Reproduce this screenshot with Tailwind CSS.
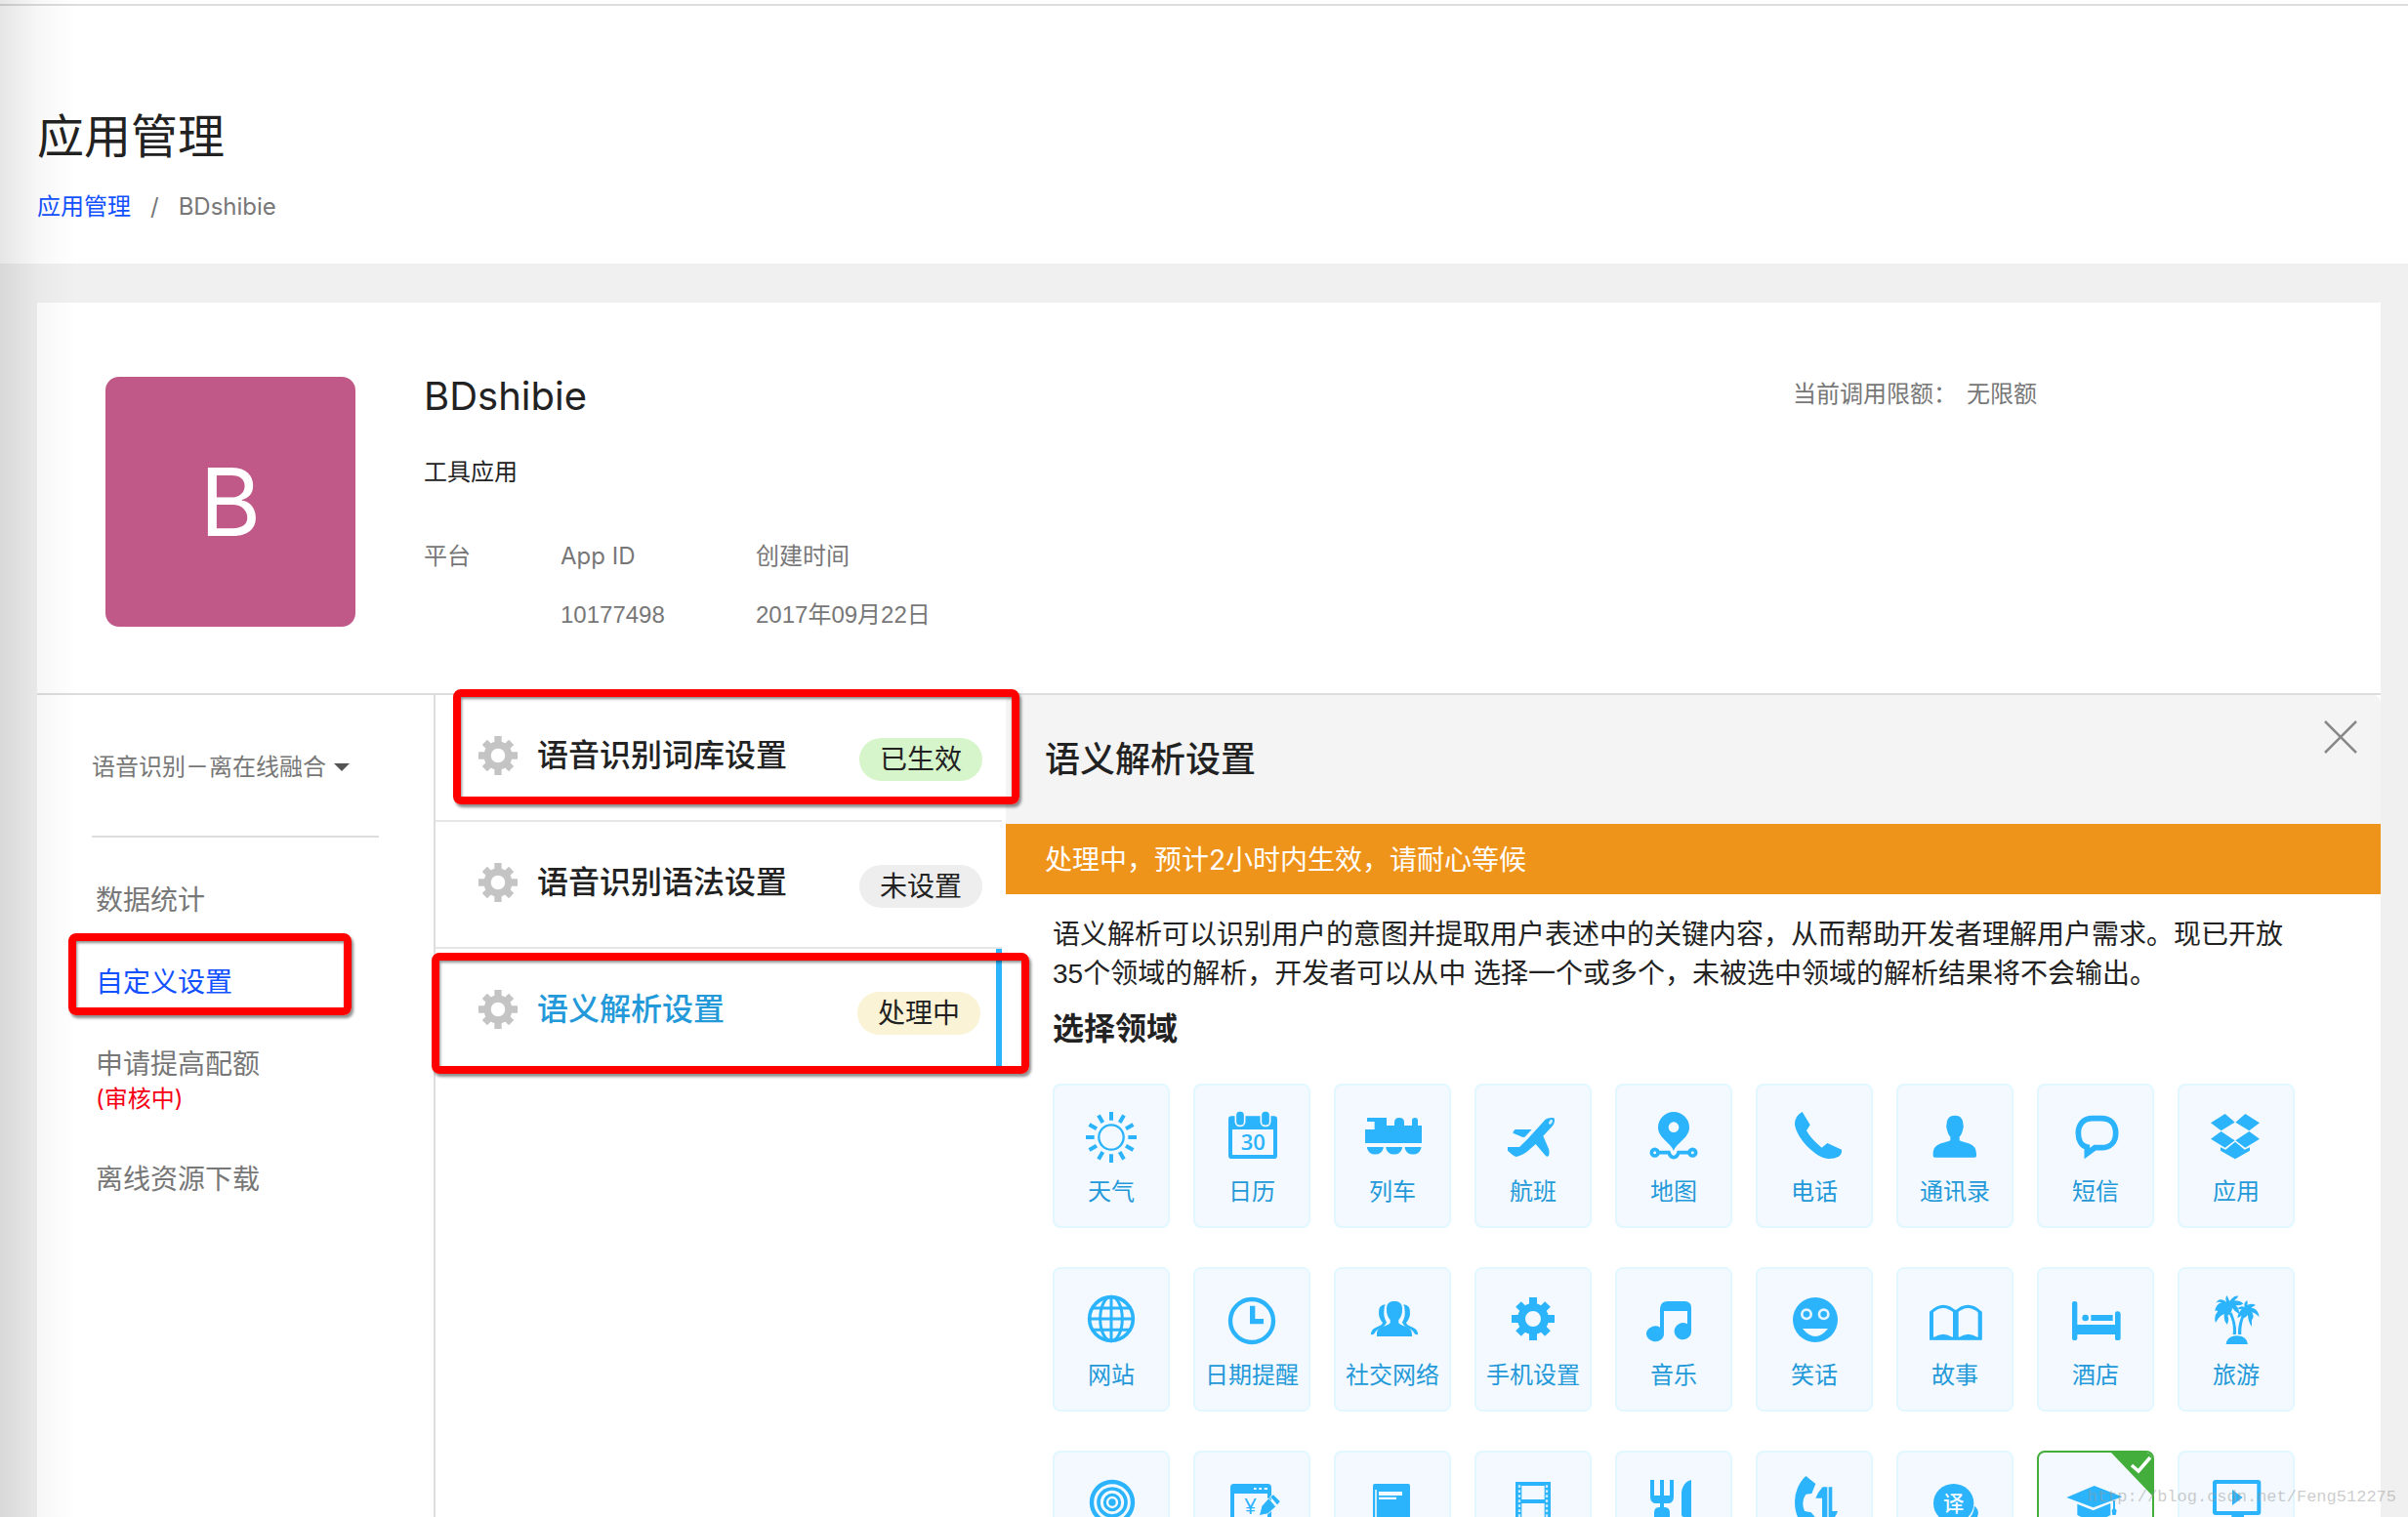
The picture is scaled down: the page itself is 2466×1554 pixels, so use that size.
<!DOCTYPE html>
<html lang="zh-CN">
<head>
<meta charset="utf-8">
<meta name="viewport" content="width=device-width, initial-scale=1">
<title>应用管理</title>
<script src="https://cdn.jsdelivr.net/npm/@tailwindcss/browser@4"></script>
</head>
<body class="bg-[#f0f0f0] font-['Inter','Noto_Sans_CJK_SC',sans-serif] text-[#222]">

<!-- Icon set -->
<svg class="hidden" aria-hidden="true">
  <symbol id="gear" viewBox="24 18 132 132">
    <circle cx="90" cy="84" r="36" fill="none" stroke="currentColor" stroke-width="24"/>
    <g stroke="currentColor" stroke-width="24">
      <path d="M90 18V40M90 128V150M24 84H46M134 84H156M45 39L60 54M120 114L135 129M135 39L120 54M60 114L45 129"/>
    </g>
  </symbol>
  <symbol id="sun" viewBox="0 0 180 180">
    <circle cx="90" cy="90" r="38" fill="none" stroke="currentColor" stroke-width="7"/>
    <g stroke="currentColor" stroke-width="12">
      <path d="M90 12V38M90 142V168M12 90H38M142 90H168"/>
      <path d="M51 22.500L64 45M116 135L129 157.500M22.500 51L45 64M135 116L157.500 129M22.500 129L45 116M135 64L157.500 51M51 157.500L64 135M116 45L129 22.500"/>
    </g>
  </symbol>
  <symbol id="calendar" viewBox="0 0 180 180">
    <rect x="18" y="25" width="150" height="131" rx="10" fill="currentColor"/>
    <rect x="30" y="66" width="126" height="78" fill="#f3f9fe"/>
    <g fill="currentColor" stroke="#f3f9fe" stroke-width="5"><rect x="40" y="9" width="28" height="46" rx="13"/><rect x="118" y="9" width="28" height="46" rx="13"/></g>
    <text x="94" y="129" font-size="66" font-weight="600" text-anchor="middle" fill="currentColor" font-family="Open Sans, sans-serif">30</text>
  </symbol>
  <symbol id="train" viewBox="0 0 180 180" overflow="visible">
    <path fill="currentColor" d="M12 30H72V54H96V45Q96 30 111 30T126 45V54H150V39Q150 30 159 30T168 39V54H180V108H6V66H35V42H12ZM12 120H62V124A26 26 0 0 1 12 124ZM70 120H120V124A26 26 0 0 1 70 124ZM128 120H178V124A26 26 0 0 1 128 124Z"/>
  </symbol>
  <symbol id="plane" viewBox="0 0 180 180">
    <path fill="currentColor" d="M128 35Q136 29 150 30Q157 30 156 40Q155 50 150 55L121 86L139 128Q141 140 138 147Q133 152 128 146L98 111L74 132Q58 146 38 150Q31 149 24 142L12 131V120H48L72 97ZM35 66H86L66 88Q62 91 57 89L28 77Q27 73 35 66Z"/>
    <ellipse cx="144" cy="43" rx="5" ry="8" fill="#cfeefe" transform="rotate(35 144 43)"/>
  </symbol>
  <symbol id="map" viewBox="0 0 180 180">
    <path fill="currentColor" fill-rule="evenodd" d="M90 132C82 108 42 92 42 60A48 48 0 0 1 138 60C138 92 98 108 90 132ZM90 43A16 16 0 1 0 90 75A16 16 0 1 0 90 43Z"/>
    <g fill="none" stroke="currentColor" stroke-width="11"><circle cx="32" cy="137" r="10"/><circle cx="148" cy="137" r="10"/><path d="M44 137H75Q80 152 90 152T105 137H136"/></g>
  </symbol>
  <symbol id="phone" viewBox="0 0 180 180">
    <path fill="currentColor" d="M53 12L77 52L66 70Q82 98 113 122L130 108L174 128Q176 140 165 149Q150 157 132 156C92 152 34 90 30 50Q30 24 53 12Z"/>
  </symbol>
  <symbol id="user" viewBox="0 0 180 180">
    <path fill="currentColor" d="M90 23C106 23 115 33 115 48Q119 58 114 68Q110 84 104 88V99C120 110 156 104 156 142V148Q156 152 150 152H29Q23 152 23 147V142C23 104 60 110 76 99V88Q70 84 66 68Q61 58 65 48C65 33 74 23 90 23Z"/>
  </symbol>
  <symbol id="chat" viewBox="0 0 180 180">
    <path fill="none" stroke="currentColor" stroke-width="17" d="M80 32H108C136 32 152 50 152 77S136 122 108 122H88L64 140V120C46 116 37 98 37 77C37 50 54 32 80 32Z"/>
  </symbol>
  <symbol id="box" viewBox="0 0 180 180">
    <path fill="currentColor" d="M56 18L86 44L44 70L12 46ZM118 18L88 44L130 70L162 46ZM44 72L86 100L56 122L12 95ZM130 72L88 100L118 122L162 95ZM87 104L58 128L42 121V131L87 157L132 131V121L116 128Z"/>
  </symbol>
  <symbol id="globe" viewBox="0 0 180 180">
    <g fill="none" stroke="currentColor" stroke-width="9"><circle cx="90" cy="84" r="67" stroke-width="11"/><ellipse cx="90" cy="84" rx="34" ry="68"/><path d="M90 16V152M22 84H158M32 51H148M32 118H148"/></g>
  </symbol>
  <symbol id="clock" viewBox="0 0 180 180">
    <circle cx="90" cy="90" r="66" fill="none" stroke="currentColor" stroke-width="13"/><path fill="none" stroke="currentColor" stroke-width="16" d="M92 44V92H126"/>
  </symbol>
  <symbol id="social" viewBox="0 0 180 180">
    <path fill="currentColor" d="M68 40Q46 42 48 66Q48 82 60 96Q58 104 40 110Q24 116 24 132Q28 134 34 130Q40 116 58 110Q70 104 72 94Q62 78 64 60Q64 48 68 40ZM124 40Q146 42 144 66Q144 82 132 96Q134 104 152 110Q168 116 168 132Q164 134 158 130Q152 116 134 110Q122 104 120 94Q130 78 128 60Q128 48 124 40Z"/>
    <path fill="currentColor" d="M96 30C112 30 120 38 120 53Q121 74 109 87V97C122 110 150 106 150 132V138H42V132C42 106 70 110 83 97V87Q71 74 72 53C72 38 80 30 96 30Z"/>
  </symbol>
  <symbol id="music" viewBox="0 0 180 180">
    <path fill="currentColor" d="M48 106V52Q50 30 72 30H126Q144 32 144 50V122A26 26 0 1 1 132 100V60H60V132A27 24 0 1 1 48 110Z"/>
  </symbol>
  <symbol id="smile" viewBox="0 0 180 180">
    <circle cx="93" cy="87" r="69" fill="currentColor"/><g fill="none" stroke="#e4f4fe" stroke-width="8"><circle cx="66" cy="70" r="14"/><circle cx="119" cy="70" r="14"/></g><path fill="#f3f9fe" d="M54 114H132Q93 162 54 114Z"/>
  </symbol>
  <symbol id="book" viewBox="0 0 180 180">
    <path fill="none" stroke="currentColor" stroke-width="9" d="M92 64Q54 28 17 64V145H168V64Q130 28 92 64"/>
    <path fill="currentColor" d="M84 56H101V148H84ZM12 62H24V148H12ZM161 62H173V148H161ZM24 142Q54 120 84 142V148H24ZM101 142Q131 120 161 142V148H101Z"/>
  </symbol>
  <symbol id="bed" viewBox="0 0 180 180">
    <path fill="currentColor" d="M18 37Q18 30 26 30T34 37V102H150V68Q150 61 158 61T167 68V143Q167 150 158 150T150 143V132H34V143Q34 150 26 150T18 143ZM76 72H143V90H76Z"/><circle cx="59" cy="81" r="10" fill="currentColor"/>
  </symbol>
  <symbol id="palm" viewBox="0 0 180 180">
    <path fill="currentColor" d="M59 162Q62 136 92 136T126 162ZM80 132Q84 96 68 68L76 64Q92 96 90 132ZM96 132Q94 100 112 64L118 68Q104 100 106 132Z"/>
    <path fill="currentColor" d="M66 42Q52 24 62 12Q66 22 70 30Q82 12 97 14Q94 20 84 28Q104 28 112 38Q100 44 88 42Q102 54 98 68Q86 62 78 50Q78 64 64 74Q70 88 62 102Q50 88 54 70Q40 72 27 96Q20 76 34 60Q26 56 24 62Q28 38 46 34Q34 30 28 36Q36 18 54 28Q60 32 66 42ZM116 48Q112 34 124 28Q126 36 124 42Q138 34 150 42Q142 46 136 50Q158 52 161 78Q148 66 138 64Q148 76 138 88V108Q126 92 126 72Q112 90 106 74Q98 82 94 80Q96 64 108 54Q98 56 96 50Q106 42 116 48Z"/>
  </symbol>
  <symbol id="target" viewBox="0 0 180 180">
    <g fill="none" stroke="currentColor"><circle cx="93" cy="87" r="63" stroke-width="13"/><circle cx="93" cy="87" r="42" stroke-width="11"/><circle cx="93" cy="87" r="23" stroke-width="9"/></g><circle cx="93" cy="87" r="11" fill="currentColor"/>
  </symbol>
  <symbol id="bill" viewBox="0 0 180 180">
    <rect x="30" y="36" width="114" height="110" rx="5" fill="none" stroke="currentColor" stroke-width="12"/><path fill="currentColor" d="M30 34H144V60H30Z"/>
    <path stroke="#f3f9fe" stroke-width="6" d="M96 45H104M112 45H120M128 45H138"/>
    <text x="86" y="122" font-size="66" font-weight="500" text-anchor="middle" fill="currentColor" font-family="Open Sans, sans-serif">¥</text>
    <path fill="currentColor" stroke="#f3f9fe" stroke-width="3" d="M112 128L120 98L142 74L164 100L140 122ZM146 70L156 62L178 84L168 96Z"/>
  </symbol>
  <symbol id="note" viewBox="0 0 180 180">
    <rect x="30" y="30" width="114" height="145" rx="6" fill="currentColor"/><path fill="none" stroke="#c9ebfe" stroke-width="6" d="M39 48V170"/><path fill="#f3f9fe" d="M48 54H120V66H48ZM48 71H102V78H48Z"/>
  </symbol>
  <symbol id="film" viewBox="0 0 180 180">
    <path fill="none" stroke="currentColor" stroke-width="12" d="M40 30H140M50 84H130M50 144H130"/><path fill="none" stroke="currentColor" stroke-width="19" d="M45.500 24V156M134.500 24V156"/><path fill="none" stroke="#c9ebfe" stroke-width="7" stroke-dasharray="8 7" d="M48 34V156M132 34V156"/>
  </symbol>
  <symbol id="dining" viewBox="0 0 180 180">
    <path fill="currentColor" d="M18 18H30V66H48V18H60V66H78V18H90V72Q88 90 72 90H60V102Q78 102 78 118V170H30V118Q30 102 48 102V90H36Q20 90 18 72ZM144 18V132H122Q114 132 114 124V56Q118 24 144 18Z"/>
  </symbol>
  <symbol id="call" viewBox="0 0 180 180">
    <path fill="currentColor" d="M64 6L94 30L82 60L64 62Q48 84 60 114L80 118L94 134L80 170Q30 150 30 84Q32 36 64 6ZM116 40H130V150H114V74H94Q100 56 116 40ZM134 40H145V114H162Q156 134 134 150Z"/>
  </symbol>
  <symbol id="translate" viewBox="0 0 180 180">
    <ellipse cx="86" cy="90" rx="62" ry="60" fill="currentColor"/><path fill="currentColor" d="M150 98Q168 112 158 134L166 150H110Q146 138 150 98ZM42 122L36 156L80 144Z"/>
    <text x="86" y="113" font-size="64" font-weight="500" text-anchor="middle" fill="#f3f9fe" font-family="Noto Sans CJK SC, sans-serif">译</text>
  </symbol>
  <symbol id="cap" viewBox="0 0 180 180">
    <path fill="currentColor" d="M86 36L172 70L83 103L1 72ZM34 92L83 112L136 90V126Q86 156 34 126ZM144 82H150V106L155 112L152 126H142L140 112L144 106Z"/>
  </symbol>
  <symbol id="video" viewBox="0 0 180 180">
    <rect x="24" y="24" width="136" height="96" rx="3" fill="none" stroke="currentColor" stroke-width="12"/><path fill="currentColor" d="M78 48V96L110 72ZM76 124H114V144H130V152H60V144H76Z"/>
  </symbol>
</svg>

<div class="relative flex h-screen flex-col overflow-hidden">

  <header class="shrink-0 bg-white pt-1">
    <div class="border-t-2 border-[#dcdcdc] px-[38px] pt-[110px] pb-[46px]">
      <h1 class="text-[48px] leading-[48px]">应用管理</h1>
      <nav aria-label="面包屑" class="mt-9 flex gap-5 text-2xl leading-6 text-[#777]">
        <a href="#" class="text-[#1251ff]">应用管理</a>
        <span>/</span>
        <span>BDshibie</span>
      </nav>
    </div>
  </header>

  <main class="mt-10 mr-7 ml-[38px] flex flex-1 flex-col bg-white">

    <section class="flex shrink-0 border-b-2 border-[#ddd] pt-[76px] pr-[352px] pb-[50px] pl-[70px]">
      <div class="flex size-64 shrink-0 items-center justify-center rounded-[14px] bg-[#c05888] text-[96px] leading-none text-white">B</div>
      <div class="ml-[70px] flex-1">
        <h2 class="text-[40px] leading-10">BDshibie</h2>
        <p class="mt-[46px] text-2xl leading-6">工具应用</p>
        <table class="mt-[44px] text-left text-2xl text-[#777]">
          <thead>
            <tr class="h-[60px]"><th class="w-[140px] font-normal">平台</th><th class="w-[200px] font-normal">App ID</th><th class="font-normal">创建时间</th></tr>
          </thead>
          <tbody class="font-['Liberation_Sans','Noto_Sans_CJK_SC',sans-serif]">
            <tr class="h-[60px]"><td></td><td>10177498</td><td>2017年09月22日</td></tr>
          </tbody>
        </table>
      </div>
      <p class="pt-1.5 text-2xl leading-6 text-[#777]">当前调用限额：<span class="ml-2.5">无限额</span></p>
    </section>

    <div class="flex min-h-0 flex-1">

      <aside class="w-[408px] shrink-0 border-r-2 border-[#ddd] pl-14">
        <div class="mr-14 flex h-[146px] items-center border-b-2 border-[#ddd] pt-1">
          <select aria-label="服务" class="appearance-none bg-transparent text-2xl text-[#777]">
            <option>语音识别－离在线融合</option>
          </select>
          <svg class="ml-2 h-2 w-4 shrink-0 text-[#555]" viewBox="0 0 16 8" aria-hidden="true"><path d="M0 0H16L8 8Z" fill="currentColor"/></svg>
        </div>
        <nav aria-label="应用菜单" class="pl-1 text-[28px] leading-8 text-[#777]">
          <a href="#" class="mt-12 block">数据统计</a>
          <a href="#" class="relative mt-[52px] block text-[#1251ff]">自定义设置
            <span class="pointer-events-none absolute -top-[34px] -left-7 h-[84px] w-[290px] rounded-lg border-8 border-[#f00] shadow-[2px_3px_3px_rgba(0,0,0,0.45),inset_1px_2px_3px_rgba(0,0,0,0.45)]"></span>
          </a>
          <a href="#" class="mt-[52px] block">申请提高配额<span class="mt-1 block text-2xl leading-8 text-[#f50014]">(审核中)</span></a>
          <a href="#" class="mt-[50px] block">离线资源下载</a>
        </nav>
      </aside>

      <ul class="w-[580px] shrink-0">
        <li class="relative h-[130px] border-b-2 border-[#e6e6e6]">
          <button class="flex h-full w-full items-start pt-10 pr-5 pl-11 text-left">
            <svg class="mt-0.5 size-10 text-[#c4c4c4]" aria-hidden="true"><use href="#gear"/></svg>
            <span class="ml-5 flex-1 text-[32px] leading-[44px] font-medium">语音识别词库设置</span>
            <span class="mt-1 h-11 w-[126px] rounded-full bg-[#d6f5cb] text-center text-[28px] leading-[44px]">已生效</span>
          </button>
          <span class="pointer-events-none absolute -top-1.5 left-[18px] z-10 h-[118px] w-[580px] rounded-lg border-8 border-[#f00] shadow-[2px_3px_3px_rgba(0,0,0,0.45),inset_1px_2px_3px_rgba(0,0,0,0.45)]"></span>
        </li>
        <li class="h-[130px] border-b-2 border-[#e6e6e6]">
          <button class="flex h-full w-full items-start pt-10 pr-5 pl-11 text-left">
            <svg class="mt-0.5 size-10 text-[#c4c4c4]" aria-hidden="true"><use href="#gear"/></svg>
            <span class="ml-5 flex-1 text-[32px] leading-[44px] font-medium">语音识别语法设置</span>
            <span class="mt-1 h-11 w-[126px] rounded-full bg-[#eee] text-center text-[28px] leading-[44px]">未设置</span>
          </button>
        </li>
        <li class="relative h-[124px]">
          <button class="flex h-full w-full items-start border-r-[6px] border-[#2bb3fb] pt-10 pr-4 pl-11 text-left">
            <svg class="mt-0.5 size-10 text-[#c4c4c4]" aria-hidden="true"><use href="#gear"/></svg>
            <span class="ml-5 flex-1 text-[32px] leading-[44px] font-medium text-[#2399d9]">语义解析设置</span>
            <span class="mt-1 h-11 w-[126px] rounded-full bg-[#faf3d6] text-center text-[28px] leading-[44px]">处理中</span>
          </button>
          <span class="pointer-events-none absolute top-1 -left-1 z-10 h-[124px] w-[612px] rounded-lg border-8 border-[#f00] shadow-[2px_3px_3px_rgba(0,0,0,0.45),inset_1px_2px_3px_rgba(0,0,0,0.45)]"></span>
        </li>
      </ul>

      <section class="ml-1 min-w-0 flex-1">
        <div class="flex h-[132px] items-start justify-between rounded-t-lg bg-[#f4f4f4] pr-6 pl-10">
          <h2 class="pt-10 text-[36px] leading-[52px] font-medium">语义解析设置</h2>
          <button aria-label="关闭" class="mt-[26px]">
            <svg class="size-[34px] text-[#888]" viewBox="0 0 34 34" aria-hidden="true"><path d="M1 1L33 33M33 1L1 33" stroke="currentColor" stroke-width="2.500"/></svg>
          </button>
        </div>
        <p class="h-[72px] bg-[#ef941b] pl-10 text-[28px] leading-[74px] text-white">处理中，预计2小时内生效，请耐心等候</p>
        <div class="pt-[22px] pl-12">
          <p class="pr-[76px] font-['Liberation_Sans','Noto_Sans_CJK_SC',sans-serif] text-[28px] leading-10">语义解析可以识别用户的意图并提取用户表述中的关键内容，从而帮助开发者理解用户需求。现已开放35个领域的解析，开发者可以从中 选择一个或多个，未被选中领域的解析结果将不会输出。</p>
          <h3 class="mt-4 text-[32px] leading-10 font-bold">选择领域</h3>
          <div class="mt-9 flex flex-wrap gap-x-6 gap-y-10 text-2xl leading-8 text-[#2399d9]">
            <button class="h-[148px] w-[120px] rounded-lg border-2 border-[#e2f7ff] bg-[#f3f9fe] pt-1"><svg class="mx-auto mb-2.5 size-[60px] text-[#2bb3fb]" aria-hidden="true"><use href="#sun"/></svg>天气</button>
            <button class="h-[148px] w-[120px] rounded-lg border-2 border-[#e2f7ff] bg-[#f3f9fe] pt-1"><svg class="mx-auto mb-2.5 size-[60px] text-[#2bb3fb]" aria-hidden="true"><use href="#calendar"/></svg>日历</button>
            <button class="h-[148px] w-[120px] rounded-lg border-2 border-[#e2f7ff] bg-[#f3f9fe] pt-1"><svg class="mx-auto mb-2.5 size-[60px] text-[#2bb3fb]" aria-hidden="true"><use href="#train"/></svg>列车</button>
            <button class="h-[148px] w-[120px] rounded-lg border-2 border-[#e2f7ff] bg-[#f3f9fe] pt-1"><svg class="mx-auto mb-2.5 size-[60px] text-[#2bb3fb]" aria-hidden="true"><use href="#plane"/></svg>航班</button>
            <button class="h-[148px] w-[120px] rounded-lg border-2 border-[#e2f7ff] bg-[#f3f9fe] pt-1"><svg class="mx-auto mb-2.5 size-[60px] text-[#2bb3fb]" aria-hidden="true"><use href="#map"/></svg>地图</button>
            <button class="h-[148px] w-[120px] rounded-lg border-2 border-[#e2f7ff] bg-[#f3f9fe] pt-1"><svg class="mx-auto mb-2.5 size-[60px] text-[#2bb3fb]" aria-hidden="true"><use href="#phone"/></svg>电话</button>
            <button class="h-[148px] w-[120px] rounded-lg border-2 border-[#e2f7ff] bg-[#f3f9fe] pt-1"><svg class="mx-auto mb-2.5 size-[60px] text-[#2bb3fb]" aria-hidden="true"><use href="#user"/></svg>通讯录</button>
            <button class="h-[148px] w-[120px] rounded-lg border-2 border-[#e2f7ff] bg-[#f3f9fe] pt-1"><svg class="mx-auto mb-2.5 size-[60px] text-[#2bb3fb]" aria-hidden="true"><use href="#chat"/></svg>短信</button>
            <button class="h-[148px] w-[120px] rounded-lg border-2 border-[#e2f7ff] bg-[#f3f9fe] pt-1"><svg class="mx-auto mb-2.5 size-[60px] text-[#2bb3fb]" aria-hidden="true"><use href="#box"/></svg>应用</button>

            <button class="h-[148px] w-[120px] rounded-lg border-2 border-[#e2f7ff] bg-[#f3f9fe] pt-1"><svg class="mx-auto mb-2.5 size-[60px] text-[#2bb3fb]" aria-hidden="true"><use href="#globe"/></svg>网站</button>
            <button class="h-[148px] w-[120px] rounded-lg border-2 border-[#e2f7ff] bg-[#f3f9fe] pt-1"><svg class="mx-auto mb-2.5 size-[60px] text-[#2bb3fb]" aria-hidden="true"><use href="#clock"/></svg>日期提醒</button>
            <button class="h-[148px] w-[120px] rounded-lg border-2 border-[#e2f7ff] bg-[#f3f9fe] pt-1"><svg class="mx-auto mb-2.5 size-[60px] text-[#2bb3fb]" aria-hidden="true"><use href="#social"/></svg>社交网络</button>
            <button class="h-[148px] w-[120px] rounded-lg border-2 border-[#e2f7ff] bg-[#f3f9fe] pt-1"><svg class="mx-auto mt-1.5 mb-5 size-11 text-[#2bb3fb]" aria-hidden="true"><use href="#gear"/></svg>手机设置</button>
            <button class="h-[148px] w-[120px] rounded-lg border-2 border-[#e2f7ff] bg-[#f3f9fe] pt-1"><svg class="mx-auto mb-2.5 size-[60px] text-[#2bb3fb]" aria-hidden="true"><use href="#music"/></svg>音乐</button>
            <button class="h-[148px] w-[120px] rounded-lg border-2 border-[#e2f7ff] bg-[#f3f9fe] pt-1"><svg class="mx-auto mb-2.5 size-[60px] text-[#2bb3fb]" aria-hidden="true"><use href="#smile"/></svg>笑话</button>
            <button class="h-[148px] w-[120px] rounded-lg border-2 border-[#e2f7ff] bg-[#f3f9fe] pt-1"><svg class="mx-auto mb-2.5 size-[60px] text-[#2bb3fb]" aria-hidden="true"><use href="#book"/></svg>故事</button>
            <button class="h-[148px] w-[120px] rounded-lg border-2 border-[#e2f7ff] bg-[#f3f9fe] pt-1"><svg class="mx-auto mb-2.5 size-[60px] text-[#2bb3fb]" aria-hidden="true"><use href="#bed"/></svg>酒店</button>
            <button class="h-[148px] w-[120px] rounded-lg border-2 border-[#e2f7ff] bg-[#f3f9fe] pt-1"><svg class="mx-auto mb-2.5 size-[60px] text-[#2bb3fb]" aria-hidden="true"><use href="#palm"/></svg>旅游</button>

            <button aria-label="电台" class="h-[148px] w-[120px] rounded-lg border-2 border-[#e2f7ff] bg-[#f3f9fe] pb-10"><svg class="mx-auto size-[60px] text-[#2bb3fb]" aria-hidden="true"><use href="#target"/></svg></button>
            <button aria-label="记账" class="h-[148px] w-[120px] rounded-lg border-2 border-[#e2f7ff] bg-[#f3f9fe] pb-10"><svg class="mx-auto size-[60px] text-[#2bb3fb]" aria-hidden="true"><use href="#bill"/></svg></button>
            <button aria-label="小说" class="h-[148px] w-[120px] rounded-lg border-2 border-[#e2f7ff] bg-[#f3f9fe] pb-10"><svg class="mx-auto size-[60px] text-[#2bb3fb]" aria-hidden="true"><use href="#note"/></svg></button>
            <button aria-label="电影" class="h-[148px] w-[120px] rounded-lg border-2 border-[#e2f7ff] bg-[#f3f9fe] pb-10"><svg class="mx-auto size-[60px] text-[#2bb3fb]" aria-hidden="true"><use href="#film"/></svg></button>
            <button aria-label="美食" class="h-[148px] w-[120px] rounded-lg border-2 border-[#e2f7ff] bg-[#f3f9fe] pb-10"><svg class="mx-auto size-[60px] text-[#2bb3fb]" aria-hidden="true"><use href="#dining"/></svg></button>
            <button aria-label="通话" class="h-[148px] w-[120px] rounded-lg border-2 border-[#e2f7ff] bg-[#f3f9fe] pb-10"><svg class="mx-auto size-[60px] text-[#2bb3fb]" aria-hidden="true"><use href="#call"/></svg></button>
            <button aria-label="翻译" class="h-[148px] w-[120px] rounded-lg border-2 border-[#e2f7ff] bg-[#f3f9fe] pb-10"><svg class="mx-auto size-[60px] text-[#2bb3fb]" aria-hidden="true"><use href="#translate"/></svg></button>
            <button aria-label="教育" aria-pressed="true" class="relative h-[148px] w-[120px] overflow-hidden rounded-lg border-2 border-[#43ae3c] bg-[#f3f9fe] pb-10"><svg class="mx-auto size-[60px] text-[#2bb3fb]" aria-hidden="true"><use href="#cap"/></svg>
              <svg class="absolute top-0 right-0 h-11 w-[42px]" viewBox="0 0 42 44" aria-hidden="true"><path d="M0 0H42V44Z" fill="#43ae3c"/><path d="M21 13L28 19L40 5" fill="none" stroke="#fff" stroke-width="3.500"/></svg></button>
            <button aria-label="视频" class="h-[148px] w-[120px] rounded-lg border-2 border-[#e2f7ff] bg-[#f3f9fe] pb-10"><svg class="mx-auto size-[60px] text-[#2bb3fb]" aria-hidden="true"><use href="#video"/></svg></button>
          </div>
        </div>
      </section>
    </div>
  </main>

  <div class="pointer-events-none absolute inset-y-0 left-0 w-20 bg-linear-to-r from-black/10 via-black/3 to-transparent"></div>
  <p class="pointer-events-none absolute right-3 bottom-2 font-['Liberation_Mono',monospace] text-[17px] leading-6 text-[#999]/50">http://blog.csdn.net/Feng512275</p>
</div>
</body>
</html>
